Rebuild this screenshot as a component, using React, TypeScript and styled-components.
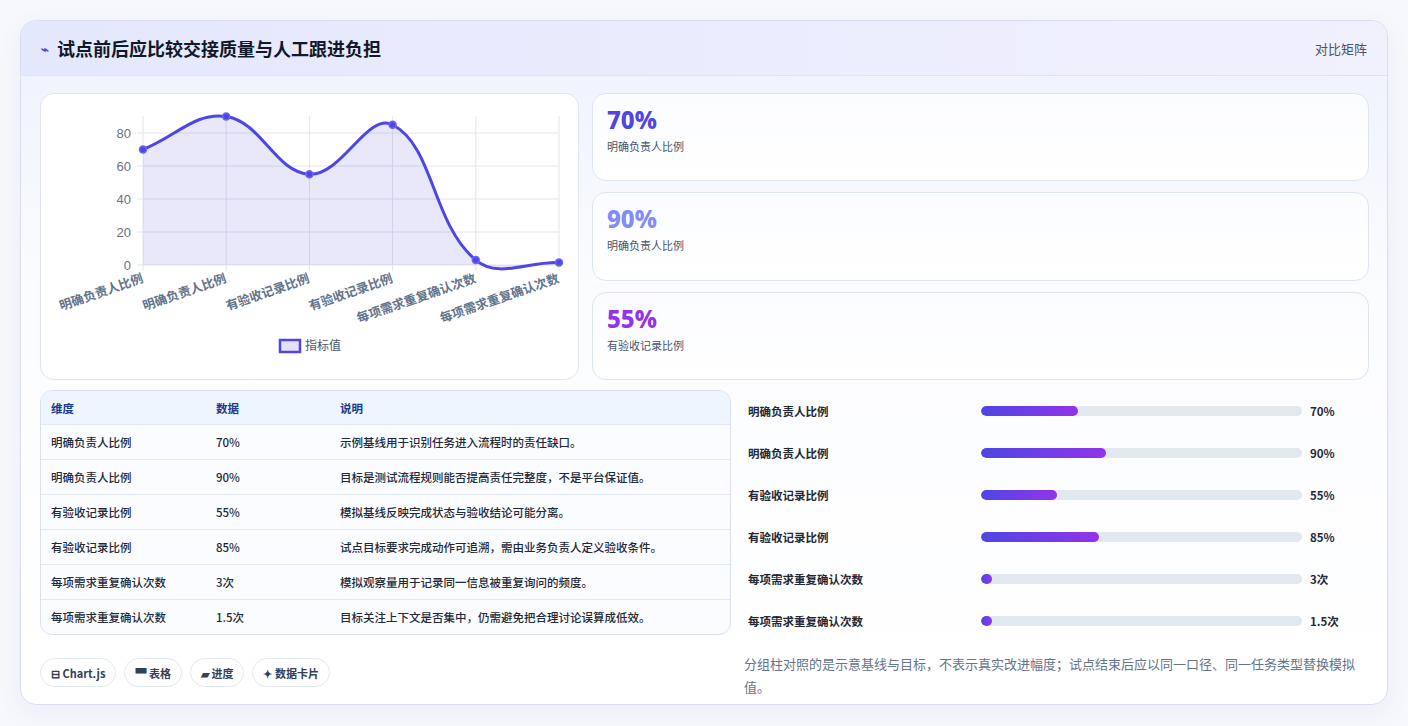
import React from "react";
import styled, { createGlobalStyle } from "styled-components";

const G = createGlobalStyle`
  html,body{margin:0;padding:0;background:#f7f8fb;}
  body{font-family:"Noto Sans CJK SC","Noto Sans",sans-serif;}
  *{box-sizing:border-box;}
`;
const Page = styled.div`padding:20px 20px 22px 20px;`;
const Card = styled.div`
  width:1368px;height:685px;border:1px solid #d9def3;border-radius:16px;overflow:hidden;
  background:linear-gradient(180deg,#eef1fd 0%,#fbfcff 40%,#ffffff 100%);
  box-shadow:0 8px 24px rgba(99,102,241,0.08);
`;
const Header = styled.div`
  height:55px;display:flex;align-items:center;justify-content:space-between;padding:0 20px 0 20px;
  background:linear-gradient(90deg,#e4e8fd,#f1f0fd);border-bottom:1px solid #dfe4f5;
`;
const Title = styled.h1`margin:0;font-size:18px;font-weight:700;color:#111827;display:flex;align-items:center;gap:8px;`;
const Bolt = styled.span`color:#4f46e5;font-size:13px;`;
const Tag = styled.span`font-size:13px;color:#475569;`;
const Body = styled.div`padding:17px 19px 0 19px;display:flex;flex-direction:column;gap:15px;`;
const TopRow = styled.div`display:grid;grid-template-columns:539px 777px;gap:13px;height:282px;`;
const Panel = styled.div`background:#fff;border:1px solid #e0e5f3;border-radius:14px;`;
const Stats = styled.div`display:grid;grid-template-rows:repeat(3,1fr);gap:11px;`;
const Stat = styled.div`
  border:1px solid #dde4f3;border-radius:14px;padding:10px 14px;
  background:linear-gradient(180deg,#fbfcff,#ffffff);
`;
const StatNum = styled.div<{ c: string }>`font-size:24px;font-weight:800;color:${p => p.c};line-height:32px;font-family:"Noto Sans","Noto Sans CJK SC",sans-serif;`;
const StatLbl = styled.div`font-size:11px;color:#475569;margin-top:2px;`;
const BottomRow = styled.div`display:grid;grid-template-columns:691px 625px;gap:13px;`;
const Table = styled.div`border:1px solid #d9e0ef;border-radius:12px;overflow:hidden;background:#fafcff;`;
const Row = styled.div<{ head?: boolean }>`
  display:grid;grid-template-columns:165px 124px 1fr;padding-left:10px;align-items:center;
  height:${p => (p.head ? 33 : 35)}px;font-size:11.5px;font-weight:500;
  color:${p => (p.head ? "#1e3a8a" : "#1f2937")};
  background:${p => (p.head ? "#eef5ff" : "transparent")};
  ${p => (p.head ? "font-weight:700;" : "")}
  & + &{border-top:1px solid #e2e8f0;}
`;
const Chips = styled.div`display:flex;gap:8px;margin-top:23px;`;
const Chip = styled.span`
  height:29px;padding:0 10px;border:1px solid #e2e8f0;border-radius:15px;display:flex;align-items:center;
  font-size:11px;font-weight:700;color:#334155;background:#fff;gap:3px;
`;
const Bars = styled.div`display:flex;flex-direction:column;padding-left:4px;`;
const BarRow = styled.div`display:grid;grid-template-columns:233px 321px 1fr;gap:0;align-items:center;height:42px;font-size:11.5px;font-weight:600;color:#1f2937;`;
const Track = styled.div`height:10px;border-radius:5px;background:#e2e8f0;overflow:hidden;`;
const Fill = styled.div`height:100%;border-radius:5px;background:linear-gradient(90deg,#4f46e5,#9333ea);min-width:11px;`;
const Val = styled.span`padding-left:8px;font-weight:700;`;
const Note = styled.p`margin:10px 0 0 0;font-size:13px;line-height:23px;color:#64748b;`;

const labels = ["明确负责人比例","明确负责人比例","有验收记录比例","有验收记录比例","每项需求重复确认次数","每项需求重复确认次数"];
const vals = [70,90,55,85,3,1.5];
const X0 = 102, XS = 83.2, Y0 = 171, YS = 1.65;

function Chart() {
  const pts = vals.map((v, i) => [X0 + i * XS, Y0 - v * YS]);
  const t = 0.4;
  const cps = pts.map((p, i) => {
    const prev = pts[i - 1] || p, next = pts[i + 1] || p;
    const d01 = Math.hypot(p[0]-prev[0], p[1]-prev[1]);
    const d12 = Math.hypot(next[0]-p[0], next[1]-p[1]);
    const s = d01 + d12 || 1;
    const fa = t * d01 / s, fb = t * d12 / s;
    return [[p[0]-fa*(next[0]-prev[0]), p[1]-fa*(next[1]-prev[1])],[p[0]+fb*(next[0]-prev[0]), p[1]+fb*(next[1]-prev[1])]];
  });
  let d = `M${pts[0][0]},${pts[0][1]}`;
  for (let i = 1; i < pts.length; i++) {
    const a = cps[i-1][1], b = cps[i][0];
    d += ` C${a[0]},${a[1]} ${b[0]},${b[1]} ${pts[i][0]},${pts[i][1]}`;
  }
  const area = d + ` L${pts[5][0]},${Y0} L${X0},${Y0} Z`;
  return (
    <svg width="537" height="280" viewBox="0 0 537 280">
      {[0,20,40,60,80].map(v => (
        <g key={v}>
          <line x1={X0-6} x2={518} y1={Y0-v*YS} y2={Y0-v*YS} stroke="#e2e5ef" />
          <text x={X0-12} y={Y0-v*YS+4.5} textAnchor="end" fontSize="13" fill="#6b7280" fontFamily="Liberation Sans, sans-serif">{v}</text>
        </g>
      ))}
      {pts.map((p, i) => <line key={i} x1={p[0]} x2={p[0]} y1={22} y2={Y0+6} stroke="#e2e5ef" />)}
      <path d={area} fill="rgba(99,90,220,0.14)" />
      <path d={d} fill="none" stroke="#4f46e5" strokeWidth="3" />
      {pts.map((p, i) => <circle key={i} cx={p[0]} cy={p[1]} r="3.5" fill="#4f46e5" stroke="#6d66ee" strokeWidth="1.5" />)}
      {pts.map((p, i) => (
        <text key={i} x={p[0]+1} y={Y0+17} textAnchor="end" fontSize="12.5" fontWeight="600" fill="#64748b" transform={`rotate(-19 ${p[0]+1} ${Y0+17})`}>{labels[i]}</text>
      ))}
      <rect x="239" y="246" width="20" height="12" fill="#e3e1fb" stroke="#4f46e5" strokeWidth="2.5" />
      <text x="264" y="256" fontSize="12" fill="#475569">指标值</text>
    </svg>
  );
}

const rows = [
  ["明确负责人比例","70%","示例基线用于识别任务进入流程时的责任缺口。"],
  ["明确负责人比例","90%","目标是测试流程规则能否提高责任完整度，不是平台保证值。"],
  ["有验收记录比例","55%","模拟基线反映完成状态与验收结论可能分离。"],
  ["有验收记录比例","85%","试点目标要求完成动作可追溯，需由业务负责人定义验收条件。"],
  ["每项需求重复确认次数","3次","模拟观察量用于记录同一信息被重复询问的频度。"],
  ["每项需求重复确认次数","1.5次","目标关注上下文是否集中，仍需避免把合理讨论误算成低效。"],
];
const fills = [30.2, 39, 23.7, 36.8, 0, 0];

export default function App() {
  return (
    <Page>
      <G />
      <Card>
        <Header>
          <Title><Bolt>⌁</Bolt>试点前后应比较交接质量与人工跟进负担</Title>
          <Tag>对比矩阵</Tag>
        </Header>
        <Body>
          <TopRow>
            <Panel><Chart /></Panel>
            <Stats>
              <Stat><StatNum c="#4f46e5">70%</StatNum><StatLbl>明确负责人比例</StatLbl></Stat>
              <Stat><StatNum c="#818cf8">90%</StatNum><StatLbl>明确负责人比例</StatLbl></Stat>
              <Stat><StatNum c="#9333ea">55%</StatNum><StatLbl>有验收记录比例</StatLbl></Stat>
            </Stats>
          </TopRow>
          <BottomRow>
            <div>
              <Table>
                <Row head><span>维度</span><span>数据</span><span>说明</span></Row>
                {rows.map((r, i) => <Row key={i}><span>{r[0]}</span><span>{r[1]}</span><span>{r[2]}</span></Row>)}
              </Table>
              <Chips>
                <Chip>⊟ Chart.js</Chip>
                <Chip>▀ 表格</Chip>
                <Chip>▰ 进度</Chip>
                <Chip>✦ 数据卡片</Chip>
              </Chips>
            </div>
            <div>
              <Bars>
                {rows.map((r, i) => (
                  <BarRow key={i}>
                    <span>{r[0]}</span>
                    <Track><Fill style={{ width: `${fills[i]}%` }} /></Track>
                    <Val>{r[1]}</Val>
                  </BarRow>
                ))}
              </Bars>
              <Note>分组柱对照的是示意基线与目标，不表示真实改进幅度；试点结束后应以同一口径、同一任务类型替换模拟值。</Note>
            </div>
          </BottomRow>
        </Body>
      </Card>
    </Page>
  );
}
